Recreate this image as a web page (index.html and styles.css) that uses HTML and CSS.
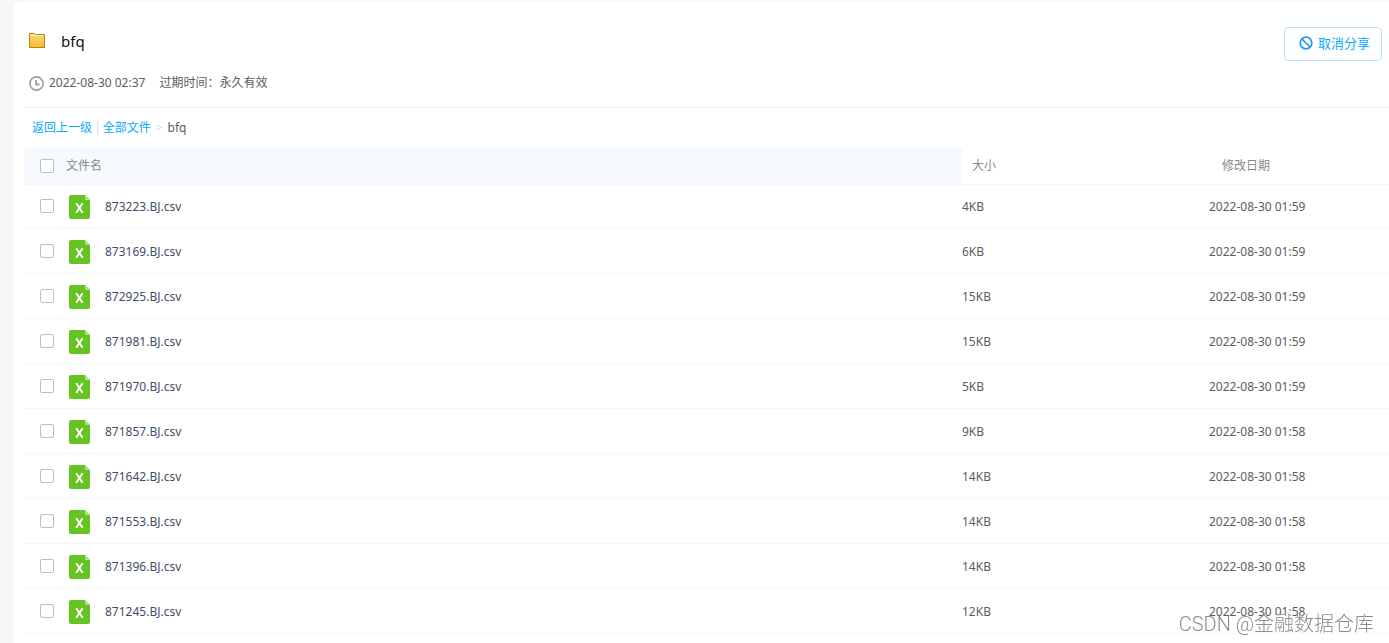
FILE: index.html
```html
<!DOCTYPE html>
<html lang="zh-CN">
<head>
  <meta charset="UTF-8">
  <meta name="viewport" content="width=device-width, initial-scale=1.0">
  <title>bfq</title>
  <link rel="stylesheet" href="styles.css">
</head>
<body>

<svg class="sprite" aria-hidden="true">
  <symbol id="icon-csv" viewBox="0 0 21 24">
    <path d="M2 0h14l5 5v17a2 2 0 0 1-2 2H2a2 2 0 0 1-2-2V2a2 2 0 0 1 2-2z" fill="#65c421"/>
    <path d="M16 0l5 5h-4a1 1 0 0 1-1-1z" fill="#b2e190"/>
    <path d="M7.2 8.2l6.4 9.6M13.6 8.2l-6.4 9.6" fill="none" stroke="#fff" stroke-width="2"/>
  </symbol>
</svg>

<main class="panel">
  <header class="share-header">
    <div class="share-title">
      <svg class="folder" width="16" height="15" viewBox="0 0 16 15">
        <defs>
          <linearGradient id="folder-fill" x1="0" y1="0" x2="0" y2="1">
            <stop offset="0" stop-color="#ffdc7c"/>
            <stop offset="1" stop-color="#f4b92f"/>
          </linearGradient>
        </defs>
        <path d="M.5.5h5l1 1h9v13H.5z" fill="url(#folder-fill)" stroke="#b98312"/>
        <path d="M1.5 2.5h13" stroke="#fff3c4"/>
      </svg>
      <h1>bfq</h1>
    </div>
    <button type="button" class="cancel-btn">
      <svg width="14" height="14" viewBox="0 0 14 14" fill="none" stroke="#2196fa" stroke-width="1.7">
        <circle cx="7" cy="7" r="5.8"/>
        <path d="M3 3l8 8"/>
      </svg>
      <span>取消分享</span>
    </button>
  </header>

  <div class="share-info">
    <svg width="15" height="15" viewBox="0 0 15 15" fill="none" stroke="#9e9e9e">
      <circle cx="7.5" cy="7.5" r="6.6" stroke-width="1.6"/>
      <path d="M7 4v4.5h3.5" stroke-width="1.8"/>
    </svg>
    <span class="share-time">2022-08-30 02:37</span>
    <span>过期时间：永久有效</span>
  </div>

  <nav class="crumbs">
    <a href="#">返回上一级</a>
    <span class="bar">|</span>
    <a href="#">全部文件</a>
    <span class="arrow">&gt;</span>
    <span>bfq</span>
  </nav>

  <table class="files">
    <thead>
      <tr>
        <th class="name"><label><input type="checkbox">文件名</label></th>
        <th class="size">大小</th>
        <th class="date">修改日期</th>
      </tr>
    </thead>
    <tbody>
      <tr>
        <td><label><input type="checkbox"><svg class="csv"><use href="#icon-csv"/></svg>873223.BJ.csv</label></td>
        <td>4KB</td>
        <td>2022-08-30 01:59</td>
      </tr>
      <tr>
        <td><label><input type="checkbox"><svg class="csv"><use href="#icon-csv"/></svg>873169.BJ.csv</label></td>
        <td>6KB</td>
        <td>2022-08-30 01:59</td>
      </tr>
      <tr>
        <td><label><input type="checkbox"><svg class="csv"><use href="#icon-csv"/></svg>872925.BJ.csv</label></td>
        <td>15KB</td>
        <td>2022-08-30 01:59</td>
      </tr>
      <tr>
        <td><label><input type="checkbox"><svg class="csv"><use href="#icon-csv"/></svg>871981.BJ.csv</label></td>
        <td>15KB</td>
        <td>2022-08-30 01:59</td>
      </tr>
      <tr>
        <td><label><input type="checkbox"><svg class="csv"><use href="#icon-csv"/></svg>871970.BJ.csv</label></td>
        <td>5KB</td>
        <td>2022-08-30 01:59</td>
      </tr>
      <tr>
        <td><label><input type="checkbox"><svg class="csv"><use href="#icon-csv"/></svg>871857.BJ.csv</label></td>
        <td>9KB</td>
        <td>2022-08-30 01:58</td>
      </tr>
      <tr>
        <td><label><input type="checkbox"><svg class="csv"><use href="#icon-csv"/></svg>871642.BJ.csv</label></td>
        <td>14KB</td>
        <td>2022-08-30 01:58</td>
      </tr>
      <tr>
        <td><label><input type="checkbox"><svg class="csv"><use href="#icon-csv"/></svg>871553.BJ.csv</label></td>
        <td>14KB</td>
        <td>2022-08-30 01:58</td>
      </tr>
      <tr>
        <td><label><input type="checkbox"><svg class="csv"><use href="#icon-csv"/></svg>871396.BJ.csv</label></td>
        <td>14KB</td>
        <td>2022-08-30 01:58</td>
      </tr>
      <tr>
        <td><label><input type="checkbox"><svg class="csv"><use href="#icon-csv"/></svg>871245.BJ.csv</label></td>
        <td>12KB</td>
        <td>2022-08-30 01:58</td>
      </tr>
    </tbody>
  </table>
</main>

<div class="watermark">CSDN @金融数据仓库</div>

</body>
</html>
```
FILE: styles.css
```css
* {
  box-sizing: border-box;
}

body {
  margin: 0;
  padding: 2px 0 0 14px;
  background: #f7f7f7;
  color: #5c5c5c;
  font-family: "Noto Sans", "Noto Sans CJK SC", sans-serif;
  font-size: 12px;
  line-height: 18px;
}

svg {
  flex: none;
}

.sprite {
  position: absolute;
  width: 0;
  height: 0;
}

.panel {
  min-height: calc(100vh - 2px);
  padding: 25px 0 8px 10px;
  background: #fff;
  border-radius: 6px 0 0 0;
}

.share-header {
  display: flex;
  justify-content: space-between;
  align-items: flex-start;
  height: 46px;
  padding: 0 7px 0 5px;
}

.share-title {
  display: flex;
  align-items: center;
  gap: 16px;
  height: 28px;
}

.folder {
  margin-bottom: 2px;
}

h1 {
  margin: 0;
  color: #111;
  font-size: 15px;
  font-weight: normal;
  line-height: 28px;
}

.cancel-btn {
  display: flex;
  align-items: center;
  justify-content: center;
  gap: 5px;
  width: 98px;
  height: 34px;
  padding: 0 0 3px 3px;
  background: #fff;
  border: 1px solid #b5e3ff;
  border-radius: 4px;
  color: #09aaff;
  font-family: inherit;
  font-size: 13px;
  cursor: pointer;
}

.share-info {
  display: flex;
  align-items: center;
  gap: 5px;
  height: 35px;
  padding: 0 5px 14px;
  border-bottom: 1px solid #f2f2f2;
}

.share-time {
  margin-right: 9px;
}

.crumbs {
  display: flex;
  align-items: center;
  height: 40px;
  padding-left: 8px;
}

.crumbs a {
  color: #09aaff;
  text-decoration: none;
}

.crumbs .bar,
.crumbs .arrow {
  color: #c4dbfe;
}

.crumbs .bar {
  margin: 0 2px;
}

.crumbs .arrow {
  margin: 0 5px;
}

.files {
  width: 100%;
  table-layout: fixed;
  border-spacing: 0;
}

.files th,
.files td {
  height: 45px;
  padding: 0;
  border-bottom: 1px solid #f2f6fd;
  text-align: left;
}

.files th {
  height: 37px;
  color: #888;
  font-weight: normal;
}

.files tbody tr:first-child td {
  height: 44px;
}

.files td {
  padding-top: 1px;
}

.files th.name {
  background: #f6faff;
  border-radius: 4px 0 0 0;
}

.files .size {
  width: 247px;
  padding-left: 10px;
}

.files .date {
  width: 180px;
  padding-left: 13px;
}

.files label {
  display: flex;
  align-items: center;
  padding-left: 16px;
}

td label {
  color: #424e67;
}

.files input {
  appearance: none;
  flex: none;
  width: 14px;
  height: 14px;
  margin: 0 12px 0 0;
  background: #fff;
  border: 1px solid #b4c1d3;
  border-radius: 2px;
}

.files td input {
  margin-bottom: 2px;
}

.files input:checked {
  background: #09aaff;
}

.csv {
  width: 21px;
  height: 24px;
  margin: 0 15px 0 3px;
}

.watermark {
  position: fixed;
  right: 15px;
  bottom: 6px;
  color: #8c8c8c;
  font-family: Roboto, "Noto Sans CJK SC", sans-serif;
  font-size: 20px;
  font-weight: 300;
  line-height: 26px;
  text-shadow: 1px 1px 0 #fff;
  pointer-events: none;
}
```
